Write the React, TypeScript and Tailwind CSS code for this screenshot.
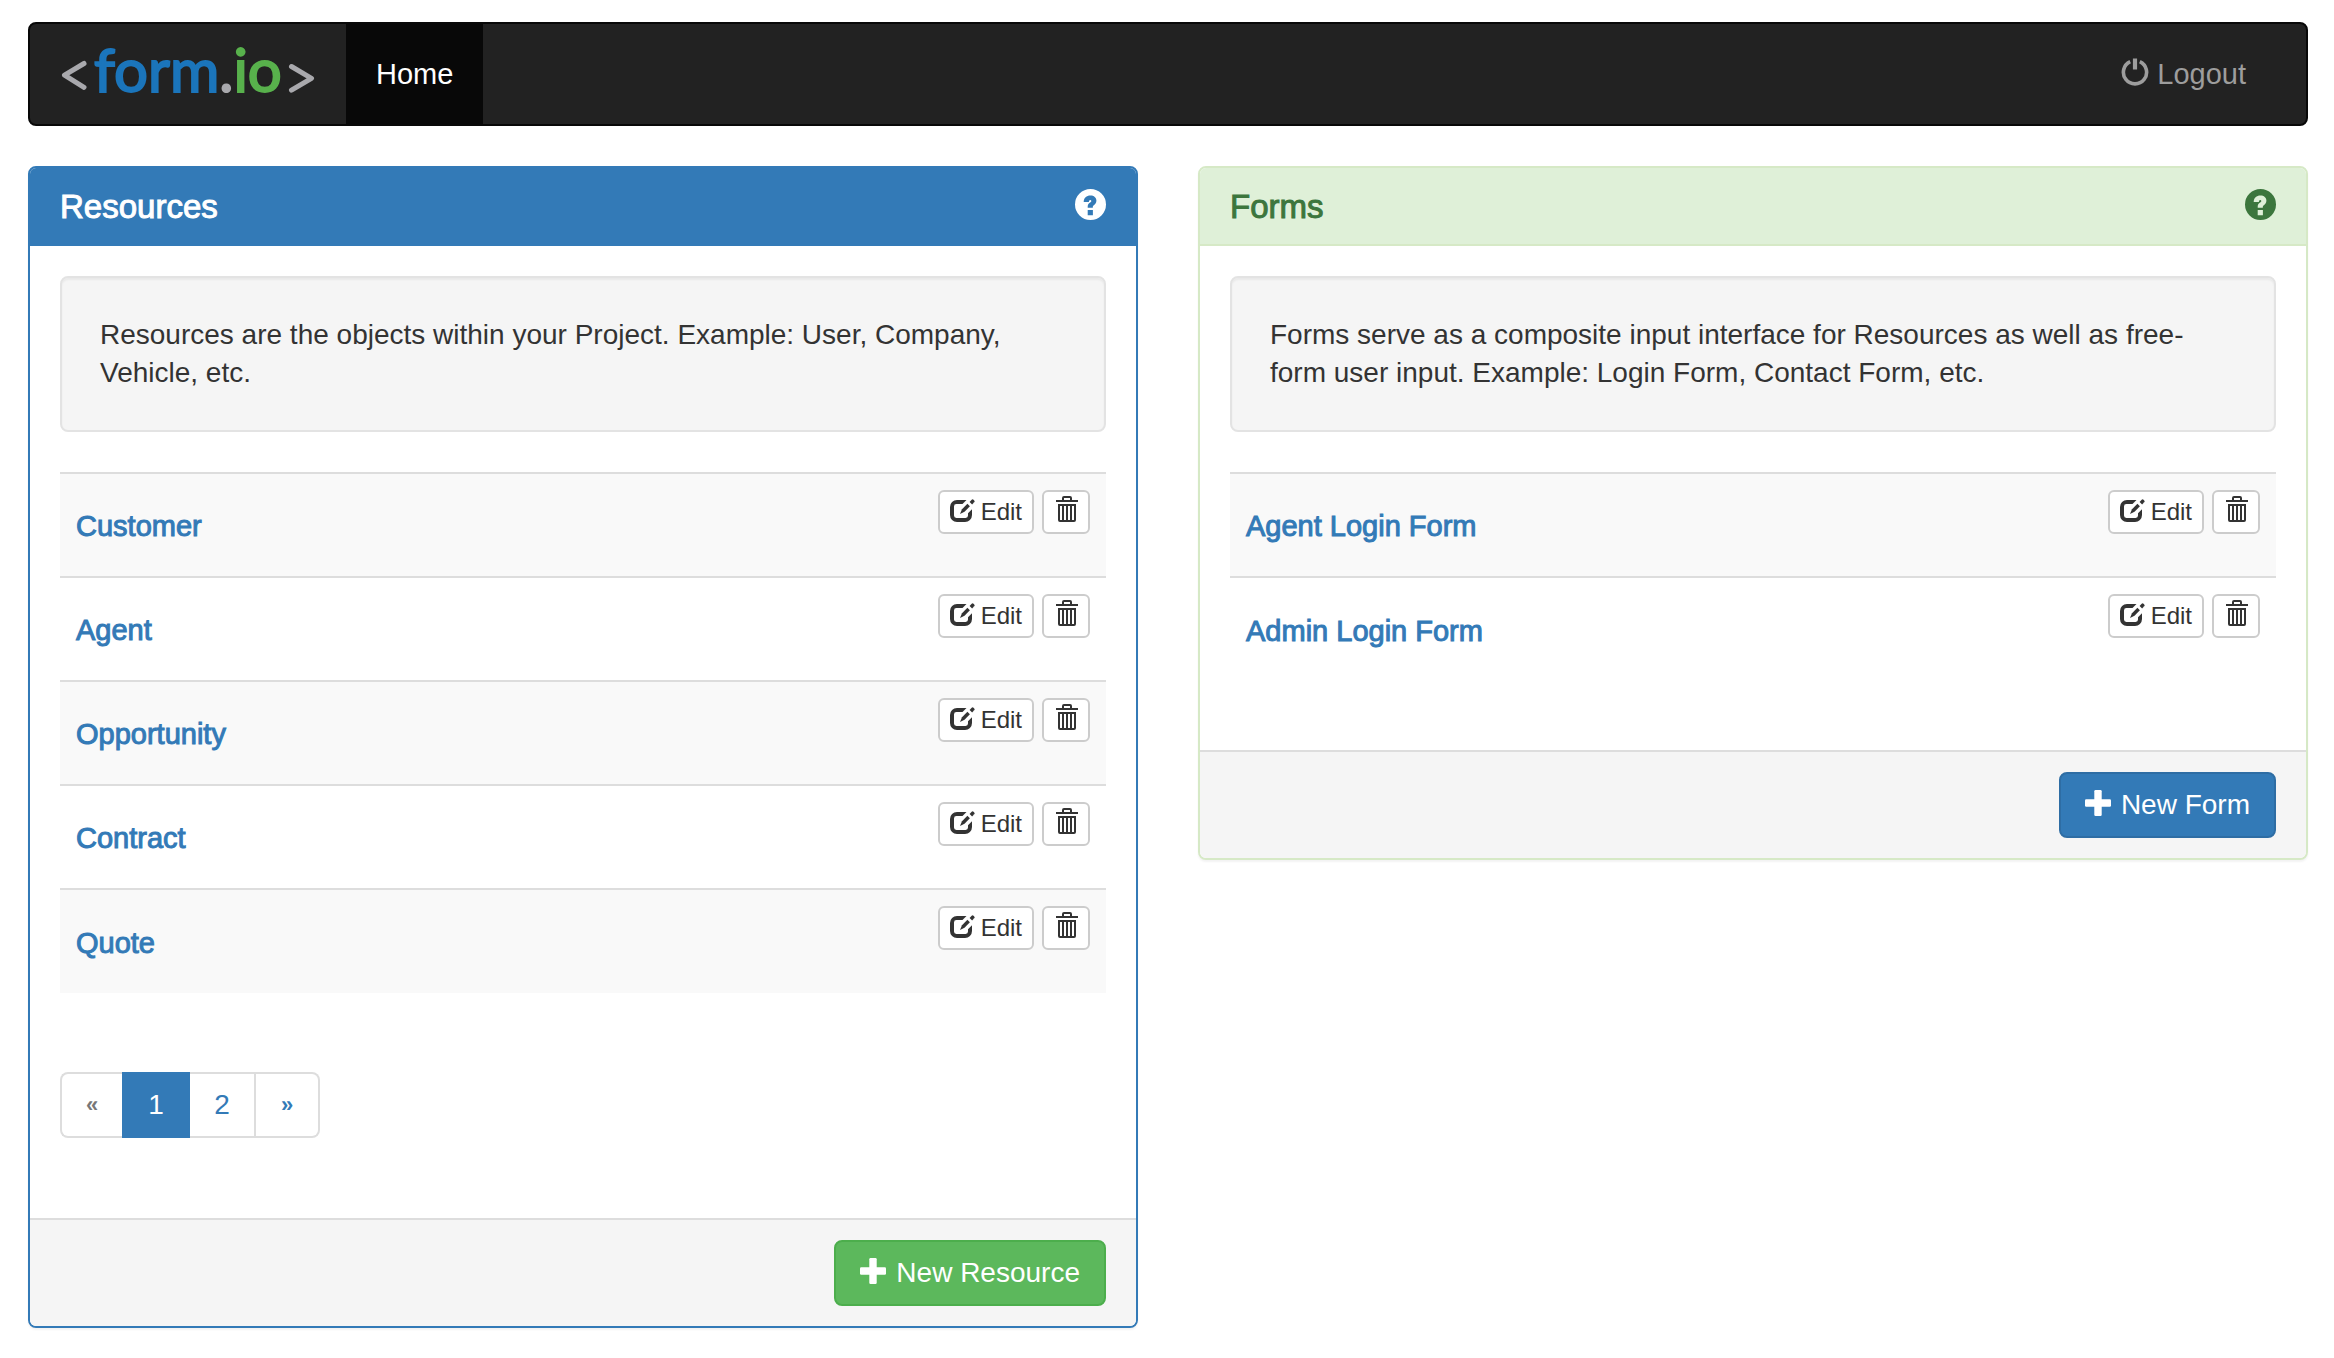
import type { ReactNode } from "react";

function Logo() {
  return (
    <svg viewBox="60 24 256 100" className="h-[100px] w-[256px]" role="img" aria-label="form.io">
      <g fill="none" stroke="#a9a9ad" strokeWidth="5" strokeLinecap="round" strokeLinejoin="round">
        <path d="M84 63.5 64.5 75.2 84 87.3" />
        <path d="M291.5 66.5 311.5 78.3 291.5 90.2" />
      </g>
      <text x="94" y="92" fontFamily="Lato, sans-serif" fontSize="60" strokeWidth="2">
        <tspan fill="#1b75bb" stroke="#1b75bb">form</tspan>
        <tspan fill="#a9a9ad" stroke="#a9a9ad">.</tspan>
        <tspan fill="#58b14c" stroke="#58b14c">io</tspan>
      </text>
    </svg>
  );
}

function PowerIcon() {
  return (
    <svg viewBox="0 0 28 28" className="mb-1 size-[28px]" fill="none" stroke="currentColor" aria-hidden="true">
      <path d="M9.2 3.7a11.6 11.6 0 1 0 9.6 0" strokeWidth="3.6" />
      <path d="M14 .5v11" strokeWidth="4.2" />
    </svg>
  );
}

function HelpIcon() {
  return (
    <svg viewBox="0 0 31 31" className="size-[31px]" fill="currentColor" fillRule="evenodd" aria-hidden="true">
      <path d="M15.5 0a15.5 15.5 0 1 0 0 31a15.5 15.5 0 1 0 0-31zM8.7 13C8.8 8.8 11.5 6.6 15.4 6.6C19 6.6 21.4 8.6 21.4 11.8C21.4 14.2 20 15.3 18.8 16.2C17.9 16.9 17.8 17.3 17.8 18.8H12.7C12.6 15.8 13.3 14.9 14.8 13.8C15.8 13 16.3 12.6 16.3 11.9C16.3 11.3 15.9 11 15.3 11C14.4 11 13.9 11.7 13.9 13ZM12.7 21h5.2v5.3h-5.2z" />
    </svg>
  );
}

function EditIcon() {
  return (
    <svg viewBox="0 0 25 24" className="mb-[2px] h-[24px] w-[25px]" fill="currentColor" aria-hidden="true">
      <path d="M16.5 1H7A7 7 0 0 0 0 8V16A7 7 0 0 0 7 23H15A7 7 0 0 0 22 16V10.3L18 14.3V16.6A2.4 2.4 0 0 1 15.6 19H6.4A2.4 2.4 0 0 1 4 16.6V7.4A2.4 2.4 0 0 1 6.4 5H12.5Z" />
      <path d="M10 14.9 12 10.2 17.4 4.8 19.9 7.3 14.5 12.8Z" />
      <path d="M19.6 2.9 21.7.8a1.3 1.3 0 0 1 1.8 0l.7.7a1.3 1.3 0 0 1 0 1.8L22.1 5.4Z" />
    </svg>
  );
}

function TrashIcon() {
  return (
    <svg viewBox="0 0 22 26" className="mb-[6px] ml-[2px] h-[26px] w-[22px]" fill="currentColor" fillRule="evenodd" aria-hidden="true">
      <path d="M6 4V2A2 2 0 0 1 8 0H14A2 2 0 0 1 16 2V4H22V6H0V4ZM8 4H14V2H8Z" />
      <path d="M2 8H20V24A2 2 0 0 1 18 26H4A2 2 0 0 1 2 24ZM4 10V24H6V10ZM8 10V24H10V10ZM12 10V24H14V10ZM16 10V24H18V10Z" />
    </svg>
  );
}

function PlusIcon() {
  return (
    <svg viewBox="0 0 26 26" className="mb-1 size-[26px]" fill="currentColor" aria-hidden="true">
      <rect x="9.3" width="7.4" height="26" rx="1.2" />
      <rect y="9.3" width="26" height="7.4" rx="1.2" />
    </svg>
  );
}

type PanelProps = {
  title: string;
  description: string;
  items: string[];
  frame: string;
  heading: string;
  action: string;
  actionStyle: string;
  bodySpacing: string;
  children?: ReactNode;
};

function Panel({ title, description, items, frame, heading, action, actionStyle, bodySpacing, children }: PanelProps) {
  return (
    <section className={`overflow-hidden rounded-lg border-2 bg-white shadow-[0_2px_2px_rgba(0,0,0,0.05)] ${frame}`}>
      <header className={`flex h-[78px] items-center justify-between border-b-2 px-[30px] ${heading}`}>
        <h2 className="pt-[2px] text-[33px] leading-[36px] [-webkit-text-stroke:1px_currentColor]">{title}</h2>
        <button type="button" aria-label={`About ${title}`} className="mb-1">
          <HelpIcon />
        </button>
      </header>
      <div className={`px-[30px] pt-[30px] ${bodySpacing}`}>
        <p className="mb-[40px] rounded-lg border-2 border-[#e3e3e3] bg-[#f5f5f5] p-[38px] leading-[38px] shadow-[inset_0_2px_2px_rgba(0,0,0,0.05)]">
          {description}
        </p>
        <table className="w-full">
          <tbody>
            {items.map((item) => (
              <tr key={item} className="h-[104px] border-t-2 border-[#ddd] odd:bg-[#f9f9f9]">
                <td className="px-[16px] pt-[4px] align-middle">
                  <a href="#" className="text-[29px] leading-[32px] text-[#337ab7] [-webkit-text-stroke:1px_currentColor]">
                    {item}
                  </a>
                </td>
                <td className="px-[16px] pt-[16px] align-top">
                  <div className="flex justify-end gap-[8px]">
                    <button
                      type="button"
                      className="flex h-[44px] items-center gap-[6px] rounded-md border-2 border-[#ccc] bg-white px-[10px] text-[24px] leading-[36px]"
                    >
                      <EditIcon />
                      Edit
                    </button>
                    <button
                      type="button"
                      aria-label={`Delete ${item}`}
                      className="flex h-[44px] w-[48px] items-center justify-center rounded-md border-2 border-[#ccc] bg-white"
                    >
                      <TrashIcon />
                    </button>
                  </div>
                </td>
              </tr>
            ))}
          </tbody>
        </table>
        {children}
      </div>
      <footer className="flex justify-end border-t-2 border-[#ddd] bg-[#f5f5f5] px-[30px] py-[20px]">
        <button
          type="button"
          className={`flex h-[66px] items-center gap-[10px] rounded-lg border-2 px-[24px] text-white ${actionStyle}`}
        >
          <PlusIcon />
          {action}
        </button>
      </footer>
    </section>
  );
}

export default function App() {
  return (
    <div className="min-h-screen bg-white pt-[22px] pr-[26px] pb-[30px] pl-[28px] font-['Helvetica_Neue','Liberation_Sans',sans-serif] text-[28px] leading-[40px] text-[#333]">
      <nav className="mb-[40px] flex h-[104px] items-stretch rounded-lg border-2 border-[#080808] bg-[#222] text-[29px]">
        <a href="#" className="flex items-center px-[30px]">
          <Logo />
        </a>
        <a href="#" aria-current="page" className="flex items-center bg-[#080808] px-[30px] text-white">
          Home
        </a>
        <a href="#" className="ml-auto flex items-center gap-[8px] px-[60px] text-[#9d9d9d]">
          <PowerIcon />
          Logout
        </a>
      </nav>
      <main className="grid grid-cols-2 items-start gap-[60px]">
        <Panel
          title="Resources"
          description="Resources are the objects within your Project. Example: User, Company, Vehicle, etc."
          items={["Customer", "Agent", "Opportunity", "Contract", "Quote"]}
          frame="border-[#337ab7]"
          heading="border-[#337ab7] bg-[#337ab7] text-white"
          action="New Resource"
          actionStyle="border-[#4cae4c] bg-[#5cb85c]"
          bodySpacing="pb-[80px]"
        >
          <div className="mt-[79px] flex h-[66px] w-fit text-[#337ab7]">
            <button type="button" disabled aria-label="Previous" className="w-[62px] rounded-l-lg border-2 border-r-0 border-[#ddd] text-[22px] font-bold text-[#777]">
              «
            </button>
            <button type="button" aria-current="page" className="w-[68px] bg-[#337ab7] text-white">
              1
            </button>
            <button type="button" className="w-[66px] border-2 border-l-0 border-[#ddd]">
              2
            </button>
            <button type="button" aria-label="Next" className="w-[64px] rounded-r-lg border-2 border-l-0 border-[#ddd] text-[22px] font-bold">
              »
            </button>
          </div>
        </Panel>
        <Panel
          title="Forms"
          description="Forms serve as a composite input interface for Resources as well as free-form user input. Example: Login Form, Contact Form, etc."
          items={["Agent Login Form", "Admin Login Form"]}
          frame="border-[#d6e9c6]"
          heading="border-[#d6e9c6] bg-[#dff0d8] text-[#3c763d]"
          action="New Form"
          actionStyle="border-[#2e6da4] bg-[#337ab7]"
          bodySpacing="pb-[69px]"
        />
      </main>
    </div>
  );
}
